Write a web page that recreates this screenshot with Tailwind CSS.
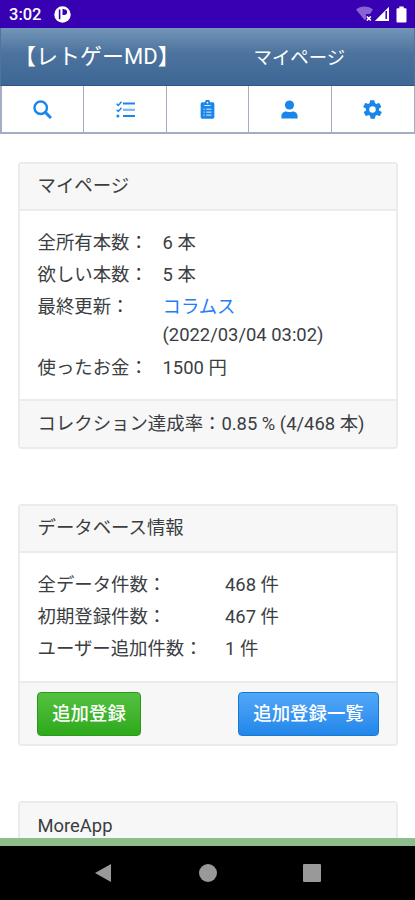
<!DOCTYPE html>
<html lang="ja">
<head>
<meta charset="utf-8">
<meta name="viewport" content="width=device-width, initial-scale=1">
<title>マイページ</title>
<script src="https://cdn.jsdelivr.net/npm/@tailwindcss/browser@4"></script>
</head>
<body class="flex h-[900px] w-[415px] flex-col overflow-hidden bg-white font-[Roboto,'Noto_Sans_CJK_JP',sans-serif] text-[18.4px] leading-[28px] text-[#3b3e41]">

<!-- Status bar -->
<div class="flex h-[28px] shrink-0 items-center bg-[#3700b3] pl-[9px] pr-[8px] text-white">
  <span class="mt-[2px] text-[16.5px] font-medium leading-none">3:02</span>
  <svg class="ml-[13px] mt-px" width="17" height="17" viewBox="0 0 17 17"><circle cx="8.5" cy="8.5" r="8.2" fill="#fff"/><path d="M5.600 3.400V13.200M9.300 3.800V8.200H10.200A2.100 2.100 0 0 0 10.200 4Z" fill="#3700b3" stroke="#3700b3" stroke-width="1.600"/></svg>
  <div class="flex-1"></div>
  <svg width="17" height="16" viewBox="0 0 17 16"><path d="M0 3.6C4.5-.5 12.500-.5 17 3.600L14 8H10V13L8.500 14Z" fill="#8a63d2"/><path d="M10.800 10.500l4 4m0-4l-4 4" stroke="#fff" stroke-width="1.700"/></svg>
  <svg class="ml-[1px]" width="16" height="16" viewBox="0 0 16 16"><path d="M15 .8V15H.8Z" fill="#fff"/><path d="M12.200 5V13" stroke="#3700b3" stroke-width="1.500"/></svg>
  <svg class="ml-[6px]" width="11" height="17" viewBox="0 0 11 17"><path d="M3.300 0.500h4.400v1.800H9.500a1 1 0 0 1 1 1V15.500a1 1 0 0 1-1 1h-8a1 1 0 0 1-1-1V3.300a1 1 0 0 1 1-1h1.800Z" fill="#fff"/></svg>
</div>

<!-- Title bar -->
<header class="flex h-[58px] shrink-0 items-center border-x border-b border-x-[#4c759f] border-b-[#2d5880] bg-linear-to-b from-[#7295b8] via-[#4c739d] via-45% to-[#3e6796] text-white">
  <h1 class="w-[224px] pl-[13px] text-[22px] font-normal whitespace-nowrap">【レトゲーMD】</h1>
  <h2 class="ml-[28.5px] pt-[3px] text-[18.4px] font-normal">マイページ</h2>
</header>

<!-- Tab navigation -->
<nav class="grid h-[48px] shrink-0 grid-cols-5 divide-x-[1.5px] divide-[#a5adc4] border-b-2 border-l-2 border-r border-[#a5adc4] text-[#1a86ea]">
  <a class="flex items-center justify-center"><svg width="19" height="19" viewBox="0 0 18 18" fill="none" stroke="currentColor"><circle cx="7.300" cy="7.300" r="5.900" stroke-width="2.300"/><path d="M11.700 11.700L17 17" stroke-width="2.800"/></svg></a>
  <a class="flex items-center justify-center"><svg width="19" height="17" viewBox="0 0 19 17" fill="none" stroke="currentColor"><path d="M7 2.500H19M7 15H19" stroke-width="2.200"/><path d="M7 8.800H19" stroke-width="2.200" opacity=".6"/><path d="M.7 2.800L2.300 4.400 5.500.8M.7 8.800L2.300 10.400 5.500 6.800" stroke-width="1.500"/><circle cx="1.900" cy="15" r="1.500" fill="currentColor" stroke="none"/></svg></a>
  <a class="flex items-center justify-center"><svg width="15" height="19" viewBox="0 0 14 18"><path fill="currentColor" d="M2 2.200h2.600a2.400 2.400 0 0 1 4.800 0H12a1.500 1.500 0 0 1 1.500 1.500v12.500a1.500 1.500 0 0 1-1.500 1.500H2a1.500 1.500 0 0 1-1.500-1.500V3.700A1.500 1.500 0 0 1 2 2.200Z"/><path stroke="#fff" stroke-width=".8" d="M4 5.200h6M3.200 8.700h1.200M5.800 8.700h5M3.200 11.500h1.200M5.800 11.500h5M3.200 14.300h1.200M5.800 14.300h5"/><circle cx="7" cy="2.500" r=".8" fill="#fff"/></svg></a>
  <a class="flex items-center justify-center"><svg width="17" height="19" viewBox="0 0 17 19" fill="currentColor"><circle cx="8.500" cy="5" r="4.600"/><path d="M.4 18.400v-2.200c0-2.800 2.200-4.700 5-4.700 2 .8 4.200.8 6.200 0 2.800 0 5 1.900 5 4.700v2.200Z"/></svg></a>
  <a class="flex items-center justify-center"><svg width="21" height="21" viewBox="0 0 24 24" fill="currentColor"><path d="M19.430 13a7.500 7.500 0 0 0 0-2l2.200-1.700c.3-.2.400-.6.200-.9l-2-3.500c-.2-.3-.5-.4-.8-.3l-2.600 1a8 8 0 0 0-1.700-1l-.4-2.700a.6.6 0 0 0-.6-.5h-4a.6.6 0 0 0-.6.5l-.4 2.700a8 8 0 0 0-1.700 1l-2.600-1c-.3-.1-.6 0-.8.300l-2 3.500c-.2.300-.1.700.2.900L4.600 11a7.500 7.500 0 0 0 0 2l-2.200 1.700c-.3.200-.4.600-.2.900l2 3.500c.2.300.5.400.8.300l2.600-1a8 8 0 0 0 1.700 1l.4 2.700c0 .3.300.5.600.5h4c.3 0 .6-.2.600-.5l.4-2.700a8 8 0 0 0 1.700-1l2.600 1c.3.100.6 0 .8-.300l2-3.500c.2-.300.1-.700-.2-.900ZM12 8.300a3.700 3.700 0 1 1 0 7.400 3.700 3.700 0 0 1 0-7.400Z"/></svg></a>
</nav>

<main class="flex min-h-0 flex-1 flex-col gap-[55px] overflow-hidden pl-[18px] pr-[17px] pt-[28px]">
  <!-- My page -->
  <section class="flex h-[287px] shrink-0 flex-col overflow-hidden rounded-[4px] border-2 border-[#ebebeb]">
    <h3 class="flex h-[47px] items-center border-b-2 border-[#ebebeb] bg-[#f7f7f7] pb-px pl-[17.5px]">マイページ</h3>
    <dl class="grid flex-1 grid-cols-[125px_1fr] content-start pl-[17.5px] pt-[16px] leading-[32px]">
      <dt>全所有本数：</dt><dd>6 本</dd>
      <dt>欲しい本数：</dt><dd>5 本</dd>
      <dt>最終更新：</dt>
      <dd class="h-[60.500px]"><a class="block h-[30px] text-[#267bf6]">コラムス</a><span class="block h-[30px] leading-[28px]">(2022/03/04 03:02)</span></dd>
      <dt>使ったお金：</dt><dd>1500 円</dd>
    </dl>
    <p class="flex h-[48px] items-center whitespace-nowrap border-t-2 border-[#ebebeb] bg-[#f7f7f7] pl-[17.5px]">コレクション達成率：0.85 % (4/468 本)</p>
  </section>

  <!-- Database information -->
  <section class="flex h-[242px] shrink-0 flex-col overflow-hidden rounded-[4px] border-2 border-[#ebebeb]">
    <h3 class="flex h-[47px] items-center border-b-2 border-[#ebebeb] bg-[#f7f7f7] pb-px pl-[17.5px]">データベース情報</h3>
    <dl class="grid flex-1 grid-cols-[187.5px_1fr] content-start pl-[17.5px] pt-[16px] leading-[32px]">
      <dt>全データ件数：</dt><dd>468 件</dd>
      <dt>初期登録件数：</dt><dd>467 件</dd>
      <dt>ユーザー追加件数：</dt><dd>1 件</dd>
    </dl>
    <div class="flex h-[63px] items-center justify-between border-t-2 border-[#ebebeb] bg-[#f7f7f7] pl-[17px] pr-[17px]">
      <button class="h-[44px] w-[104px] rounded-[4px] border border-[#2a9a19] bg-linear-to-b from-[#54c140] to-[#2da91a] font-medium text-white">追加登録</button>
      <button class="h-[44px] w-[141px] rounded-[4px] border border-[#1b78cf] bg-linear-to-b from-[#51a7f8] to-[#2087e9] font-medium text-white">追加登録一覧</button>
    </div>
  </section>

  <!-- MoreApp -->
  <section class="h-[120px] shrink-0 overflow-hidden rounded-[4px] border-2 border-[#ebebeb]">
    <h3 class="flex h-[47px] items-center border-b-2 border-[#ebebeb] bg-[#f7f7f7] pl-[17.5px]">MoreApp</h3>
  </section>
</main>

<div class="h-[8px] shrink-0 bg-[#8dbd8b]"></div>

<!-- System navigation -->
<footer class="grid h-[54px] shrink-0 grid-cols-[207px_1px_207px] bg-black">
  <div class="flex items-center pl-[94px]"><svg width="18" height="20" viewBox="0 0 18 20"><path d="M17 1V19L1 10Z" fill="#999"/></svg></div>
  <div class="flex items-center justify-center"><span class="size-[18px] shrink-0 rounded-full bg-[#999]"></span></div>
  <div class="flex items-center pl-[95px]"><span class="size-[18px] rounded-[1px] bg-[#999]"></span></div>
</footer>
</body>
</html>
